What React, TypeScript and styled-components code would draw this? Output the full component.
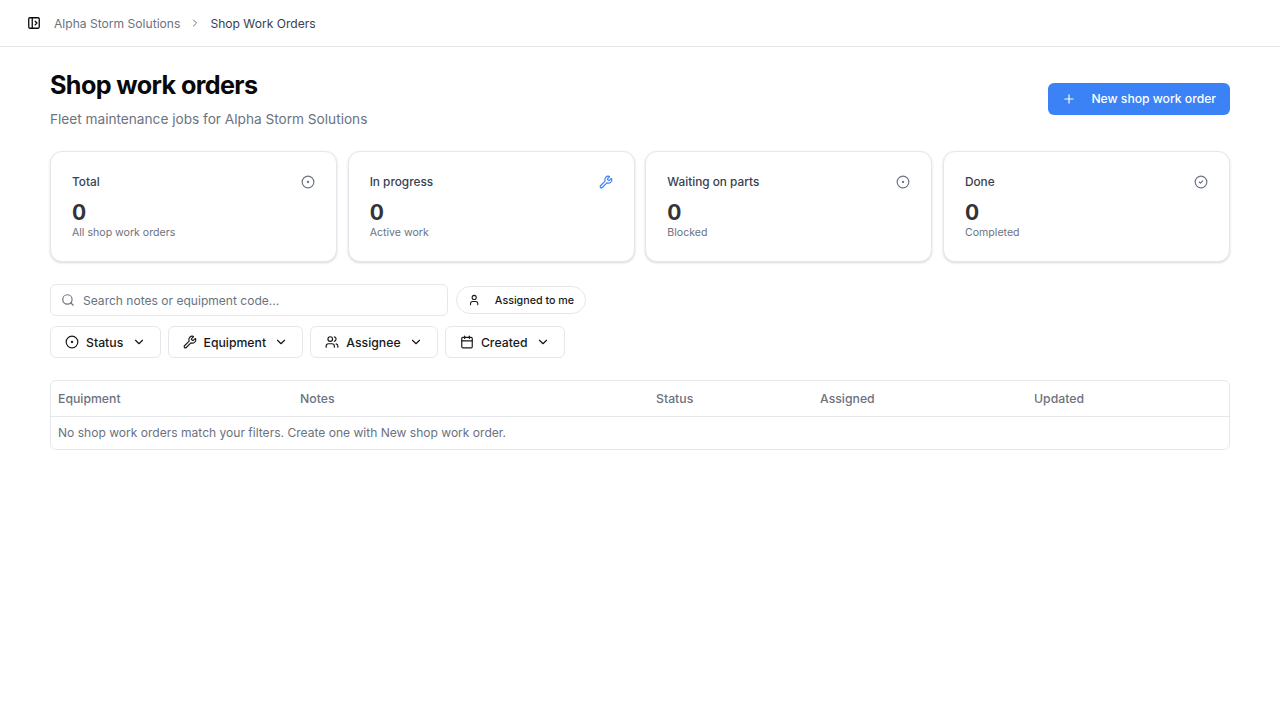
import styled, { createGlobalStyle } from "styled-components";
import {
  Calendar,
  ChevronDown,
  ChevronRight,
  CircleCheck,
  CircleDot,
  PanelLeftOpen,
  Plus,
  Search,
  User,
  Users,
  Wrench,
} from "lucide-react";

const GlobalStyle = createGlobalStyle`
  html, body {
    margin: 0;
    background: #fff;
    font-family: Inter, "Liberation Sans", sans-serif;
    color: #09090b;
  }
  * { box-sizing: border-box; }
`;

const TopBar = styled.header`
  display: flex;
  align-items: center;
  height: 47px;
  padding: 0 27px;
  border-bottom: 1px solid #e5e7eb;
  font-size: 12.1px;
`;

const Crumb = styled.span`
  margin-left: 13px;
  color: #6b7280;
`;

const CrumbCurrent = styled.span`
  margin-left: 9px;
  color: #374151;
`;

const CrumbArrow = styled(ChevronRight)`
  margin-left: 9px;
  color: #6b7280;
`;

const Main = styled.main`
  padding: 20px 50px;
`;

const PageHead = styled.div`
  display: flex;
  justify-content: space-between;
  align-items: center;
`;

const Title = styled.h1`
  margin: 0;
  font-size: 25.2px;
  line-height: 36px;
  font-weight: 700;
  letter-spacing: -0.63px;
  color: #09090b;
`;

const Subtitle = styled.p`
  margin: 6px 0 0;
  font-size: 13.65px;
  line-height: 20px;
  color: #6b7280;
`;

const PrimaryButton = styled.button`
  display: flex;
  align-items: center;
  gap: 15px;
  height: 32px;
  margin-top: 1px;
  padding: 0 14px;
  border: 0;
  border-radius: 6px;
  background: #3b82f6;
  color: #fff;
  font: inherit;
  font-size: 12.15px;
  font-weight: 500;
`;

const Stats = styled.section`
  display: grid;
  grid-template-columns: repeat(4, 1fr);
  gap: 10.67px;
  margin-top: 22px;
`;

const Card = styled.div`
  height: 111px;
  padding: 22px 21px;
  background: #fff;
  border: 1px solid #e5e7eb;
  border-radius: 12px;
  box-shadow: 0 1px 3px rgba(0, 0, 0, 0.1), 0 1px 2px rgba(0, 0, 0, 0.06);
`;

const CardHead = styled.div`
  display: flex;
  justify-content: space-between;
  align-items: center;
  height: 16px;
  font-size: 11.8px;
  font-weight: 500;
  color: #374151;
`;

const CardValue = styled.div`
  margin-top: 11px;
  font-size: 21px;
  line-height: 24px;
  font-weight: 700;
  color: #333338;
`;

const CardNote = styled.div`
  font-size: 10.6px;
  line-height: 16px;
  color: #6b7280;
`;

const SearchRow = styled.div`
  display: flex;
  align-items: center;
  gap: 7.5px;
  margin-top: 22px;
`;

const SearchBox = styled.label`
  display: flex;
  align-items: center;
  gap: 8px;
  width: 398px;
  height: 32px;
  padding: 0 10px;
  border: 1px solid #e5e7eb;
  border-radius: 6px;
  font-size: 12.05px;
  color: #6b7280;
`;

const Pill = styled.button`
  display: flex;
  align-items: center;
  gap: 15px;
  width: 130.5px;
  height: 28px;
  padding: 0 11px;
  border: 1px solid #e5e7eb;
  border-radius: 999px;
  background: #fff;
  color: #18181b;
  font: inherit;
  font-size: 10.7px;
  font-weight: 500;
  white-space: nowrap;
`;

const FilterRow = styled.div`
  display: flex;
  gap: 7px;
  margin-top: 10px;
`;

const FilterButton = styled.button`
  display: flex;
  align-items: center;
  gap: 7px;
  height: 32px;
  padding: 0 14px;
  border: 1px solid #e5e7eb;
  border-radius: 6px;
  background: #fff;
  color: #18181b;
  font: inherit;
  font-size: 12.25px;
  font-weight: 500;
`;

const FilterCaret = styled(ChevronDown)`
  margin-left: 1.25px;
`;

const TableWrap = styled.div`
  margin-top: 22px;
  border: 1px solid #e5e7eb;
  border-radius: 6px;
  overflow: hidden;
`;

const Table = styled.table`
  width: 100%;
  border-collapse: collapse;
  table-layout: fixed;
  font-size: 12.05px;
  color: #6b7280;
`;

const Th = styled.th<{ $width: number }>`
  width: ${(p) => p.$width}px;
  height: 35px;
  padding: 0 7px;
  border-bottom: 1px solid #e5e7eb;
  text-align: left;
  font-size: 12.25px;
  font-weight: 500;
`;

const Td = styled.td`
  height: 33px;
  padding: 0 7px;
`;

const stats = [
  { label: "Total", note: "All shop work orders", icon: <CircleDot size={14} color="#6b7280" /> },
  { label: "In progress", note: "Active work", icon: <Wrench size={14} color="#3b82f6" /> },
  { label: "Waiting on parts", note: "Blocked", icon: <CircleDot size={14} color="#6b7280" /> },
  { label: "Done", note: "Completed", icon: <CircleCheck size={14} color="#6b7280" /> },
];

const filters = [
  { label: "Status", icon: <CircleDot size={14} /> },
  { label: "Equipment", icon: <Wrench size={14} /> },
  { label: "Assignee", icon: <Users size={14} /> },
  { label: "Created", icon: <Calendar size={14} /> },
];

const columns = [
  { label: "Equipment", width: 242 },
  { label: "Notes", width: 356 },
  { label: "Status", width: 164 },
  { label: "Assigned", width: 214 },
  { label: "Updated", width: 202 },
];

export default function App() {
  return (
    <>
      <GlobalStyle />
      <TopBar>
        <PanelLeftOpen size={14} color="#09090b" strokeWidth={2.2} />
        <Crumb>Alpha Storm Solutions</Crumb>
        <CrumbArrow size={12} />
        <CrumbCurrent>Shop Work Orders</CrumbCurrent>
      </TopBar>
      <Main>
        <PageHead>
          <div>
            <Title>Shop work orders</Title>
            <Subtitle>Fleet maintenance jobs for Alpha Storm Solutions</Subtitle>
          </div>
          <PrimaryButton>
            <Plus size={14} />
            New shop work order
          </PrimaryButton>
        </PageHead>
        <Stats>
          {stats.map((s) => (
            <Card key={s.label}>
              <CardHead>
                {s.label}
                {s.icon}
              </CardHead>
              <CardValue>0</CardValue>
              <CardNote>{s.note}</CardNote>
            </Card>
          ))}
        </Stats>
        <SearchRow>
          <SearchBox>
            <Search size={14} />
            Search notes or equipment code...
          </SearchBox>
          <Pill>
            <User size={14} />
            Assigned to me
          </Pill>
        </SearchRow>
        <FilterRow>
          {filters.map((f) => (
            <FilterButton key={f.label}>
              {f.icon}
              {f.label}
              <FilterCaret size={14} />
            </FilterButton>
          ))}
        </FilterRow>
        <TableWrap>
          <Table>
            <thead>
              <tr>
                {columns.map((c) => (
                  <Th key={c.label} $width={c.width}>{c.label}</Th>
                ))}
              </tr>
            </thead>
            <tbody>
              <tr>
                <Td colSpan={5}>No shop work orders match your filters. Create one with New shop work order.</Td>
              </tr>
            </tbody>
          </Table>
        </TableWrap>
      </Main>
    </>
  );
}
